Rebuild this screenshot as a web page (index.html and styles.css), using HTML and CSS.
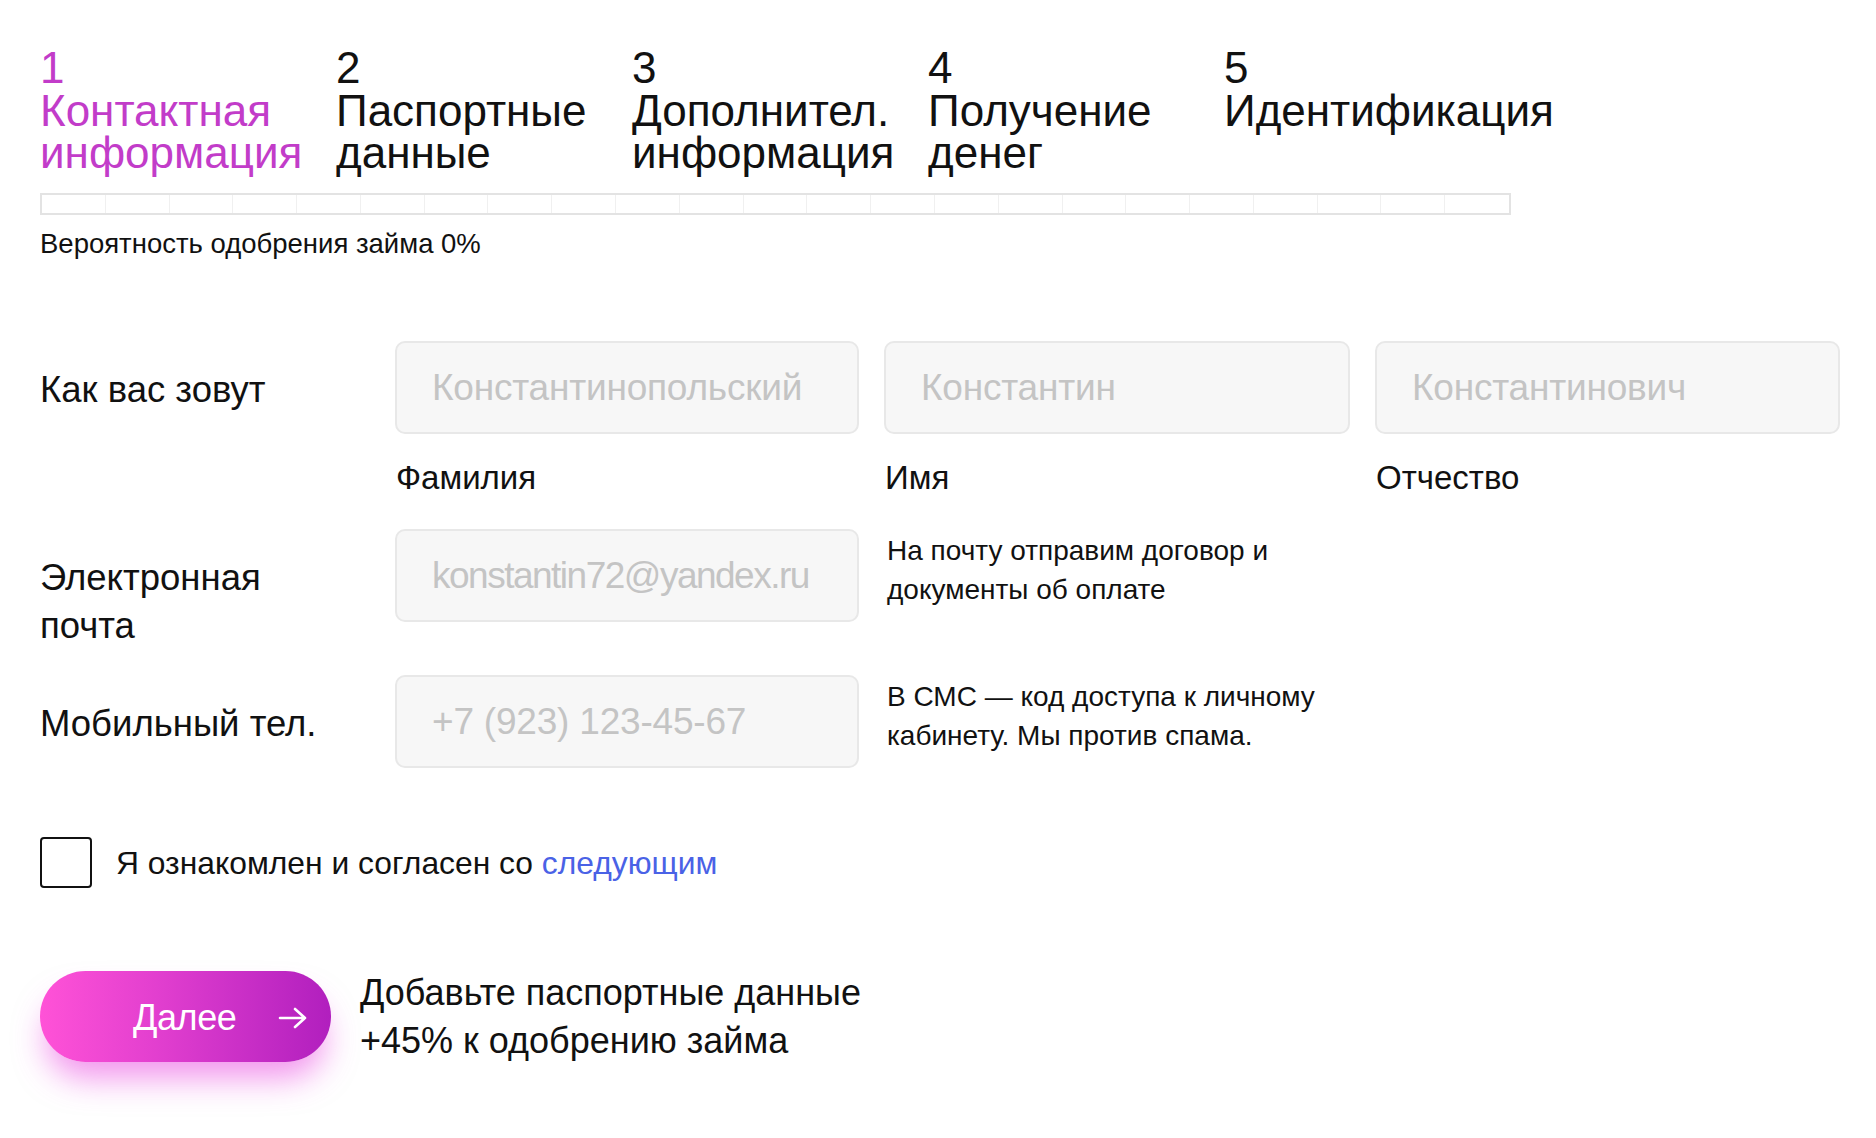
FILE: index.html
```html
<!DOCTYPE html>
<html lang="ru">
<head>
<meta charset="utf-8">
<title>Заявка на заём</title>
<link rel="stylesheet" href="styles.css">
</head>
<body>
<main class="page">
  <ol class="steps">
    <li class="step step--active">1<br>Контактная<br>информация</li>
    <li class="step">2<br>Паспортные<br>данные</li>
    <li class="step">3<br>Дополнител.<br>информация</li>
    <li class="step">4<br>Получение<br>денег</li>
    <li class="step">5<br>Идентификация</li>
  </ol>

  <div class="progress">
    <i></i><i></i><i></i><i></i><i></i><i></i><i></i><i></i><i></i><i></i><i></i><i></i>
    <i></i><i></i><i></i><i></i><i></i><i></i><i></i><i></i><i></i><i></i><i></i>
  </div>
  <p class="probability">Вероятность одобрения займа 0%</p>

  <form class="form">
    <div class="row row--name">
      <label class="row-label">Как вас зовут</label>
      <input class="field" type="text" placeholder="Константинопольский">
      <input class="field" type="text" placeholder="Константин">
      <input class="field" type="text" placeholder="Константинович">
    </div>
    <div class="row row--sub">
      <span></span>
      <span class="sub-label">Фамилия</span>
      <span class="sub-label">Имя</span>
      <span class="sub-label">Отчество</span>
    </div>
    <div class="row row--email">
      <label class="row-label">Электронная<br>почта</label>
      <input class="field field--latin" type="email" placeholder="konstantin72@yandex.ru">
      <p class="hint">На почту отправим договор и<br>документы об оплате</p>
    </div>
    <div class="row row--phone">
      <label class="row-label">Мобильный тел.</label>
      <input class="field" type="tel" placeholder="+7 (923) 123-45-67">
      <p class="hint">В СМС — код доступа к личному<br>кабинету. Мы против спама.</p>
    </div>

    <label class="agree">
      <span class="checkbox"></span>
      <span class="agree-text">Я ознакомлен и согласен со <a href="#" class="link">следующим</a></span>
    </label>

    <div class="next">
      <button type="button" class="btn">
        <span>Далее</span>
        <svg class="btn-arrow" width="29" height="24" viewBox="0 0 29 24" fill="none" stroke="#fff" stroke-width="2.6" stroke-linecap="round" stroke-linejoin="round"><path d="M2 12H27M17 3L27 12L17 21"/></svg>
      </button>
      <p class="next-note">Добавьте паспортные данные<br>+45% к одобрению займа</p>
    </div>
  </form>
</main>
</body>
</html>
```

FILE: styles.css
```css
* { box-sizing: border-box; }

html, body {
  margin: 0;
  padding: 0;
  background: #fff;
}

body {
  font-family: "Liberation Sans", Arial, Helvetica, sans-serif;
  color: #111;
}

.page {
  padding: 47px 0 80px 40px;
}

.steps {
  list-style: none;
  margin: 0;
  padding: 0;
  display: grid;
  grid-template-columns: repeat(5, 296px);
  height: 125px;
}

.step {
  display: block;
  font-size: 44px;
  line-height: 42.5px;
  color: #111;
}

.step--active {
  color: #c23cc9;
}

.progress {
  margin-top: 21px;
  width: 1471px;
  height: 22px;
  border: 2px solid #e3e3e3;
  display: grid;
  grid-template-columns: repeat(23, 1fr);
}

.progress i {
  border-right: 1px solid #f0f0f0;
}

.progress i:last-child {
  border-right: 0;
}

.probability {
  margin: 14px 0 0;
  font-size: 27.5px;
  line-height: 30px;
}

.form {
  margin: 0;
}

.row {
  display: grid;
  grid-template-columns: 330px 464px 466px 465px;
  column-gap: 25px;
  align-items: start;
}

.row--name { margin-top: 82px; }
.row--sub { margin-top: 26px; }
.row--email { margin-top: 33px; }
.row--phone { margin-top: 25px; }

.row-label {
  padding-top: 25px;
  font-size: 36.5px;
  line-height: 48px;
}

.field {
  width: 100%;
  height: 93px;
  margin: 0;
  padding: 0 0 0 35px;
  border: 2px solid #e8e8e8;
  border-radius: 10px;
  background: #f7f7f7;
  font-family: inherit;
  font-size: 37px;
  color: #111;
  letter-spacing: -0.2px;
  outline: none;
}

.field--latin {
  letter-spacing: -1.5px;
}

.field::placeholder {
  color: #c4c4c4;
}

.sub-label {
  padding-left: 1px;
  font-size: 33px;
  line-height: 36px;
}

.hint {
  grid-column: 3 / span 2;
  margin: 0;
  padding: 2px 0 0 3px;
  font-size: 28px;
  line-height: 39px;
}

.agree {
  margin-top: 69px;
  display: flex;
  align-items: center;
  gap: 24px;
  cursor: pointer;
}

.checkbox {
  width: 52px;
  height: 51px;
  border: 2.5px solid #111;
  border-radius: 4px;
  flex: none;
}

.agree-text {
  font-size: 31.8px;
  line-height: 40px;
}

.link {
  color: #4a62e6;
  text-decoration: none;
}

.next {
  margin-top: 79px;
  display: flex;
  align-items: center;
  gap: 29px;
}

.btn {
  width: 291px;
  height: 91px;
  margin: 0;
  padding: 3px 0 0 93px;
  border: 0;
  border-radius: 46px;
  background: linear-gradient(90deg, #ff52d7 0%, #e23fcf 40%, #b11fbe 100%);
  box-shadow: 0 22px 32px -6px rgba(232, 60, 222, 0.55);
  display: flex;
  align-items: center;
  gap: 42px;
  font-family: inherit;
  font-size: 36px;
  color: #fff;
  letter-spacing: -0.4px;
  cursor: pointer;
}

.btn-arrow {
  flex: none;
}

.next-note {
  margin: 0;
  padding-top: 2px;
  font-size: 36px;
  line-height: 48px;
}
```
